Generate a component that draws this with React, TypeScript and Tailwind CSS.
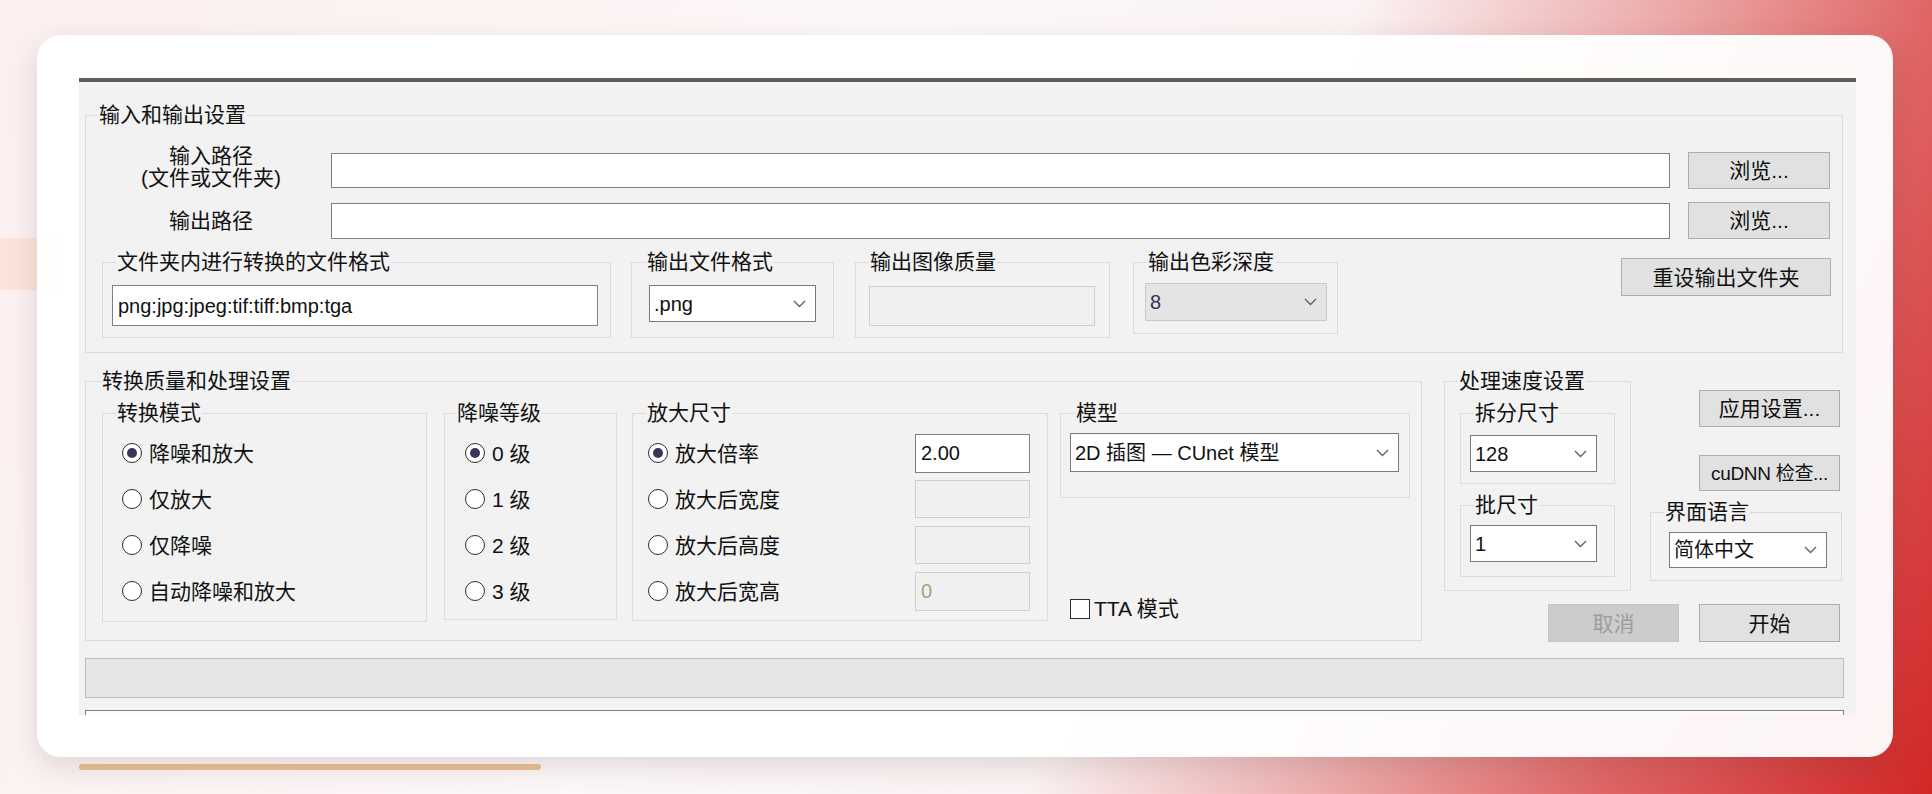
import type { ReactNode } from 'react';

// Win32 style dialog: waifu2x-caffe settings window inside a rounded card

function Group({
  title,
  className = '',
  titleClass = 'ml-[13px]',
  children,
}: {
  title: string;
  className?: string;
  titleClass?: string;
  children?: ReactNode;
}) {
  return (
    <div className={`shrink-0 pt-[12px] ${className}`}>
      <div className="flex h-full flex-col border border-[#dcdcdc]">
        <span className={`-mt-[13px] w-fit shrink-0 bg-[#f2f2f2] px-[1px] text-[21px] leading-[24px] ${titleClass}`}>{title}</span>
        {children}
      </div>
    </div>
  );
}

function Chevron() {
  return (
    <svg width="13" height="8" viewBox="0 0 13 8" className="shrink-0">
      <polyline points="1,1 6.5,6.5 12,1" fill="none" stroke="#5f5f5f" strokeWidth="1.3" />
    </svg>
  );
}

function Combo({ value, className = '', muted = false }: { value: string; className?: string; muted?: boolean }) {
  return (
    <div
      className={`flex shrink-0 items-center justify-between border pl-[4px] pr-[9px] ${
        muted ? 'border-[#c8c8c8] bg-[#e4e4e4] text-[#34344e]' : 'border-[#7a7a7a] bg-white'
      } ${className}`}
    >
      <span className="text-[20px] leading-none">{value}</span>
      <Chevron />
    </div>
  );
}

function Field({ value = '', className = '', disabled = false }: { value?: string; className?: string; disabled?: boolean }) {
  return (
    <div
      className={`flex shrink-0 items-center border pl-[5px] text-[20px] leading-none ${
        disabled ? 'border-[#cfcfcf] bg-[#f0f0f0] text-[#a3a37f]' : 'border-[#7f7f7f] bg-white'
      } ${className}`}
    >
      {value}
    </div>
  );
}

function Btn({ children, className = '', disabled = false }: { children: ReactNode; className?: string; disabled?: boolean }) {
  return (
    <button
      className={`flex shrink-0 items-center justify-center border leading-none ${
        disabled ? 'border-[#c4c4c4] bg-[#cccccc] text-[#9d9d9d]' : 'border-[#adadad] bg-[#e1e1e1]'
      } ${className.includes('text-[') ? '' : 'text-[21px]'} ${className}`}
    >
      {children}
    </button>
  );
}

function Radio({ label, checked = false }: { label: string; checked?: boolean }) {
  return (
    <div className="flex h-[46px] items-center">
      <span className="flex h-[20px] w-[20px] items-center justify-center rounded-full border-[1.5px] border-[#2e2e2e] bg-white">
        {checked && <span className="h-[10px] w-[10px] rounded-full bg-[#38375a]" />}
      </span>
      <span className="ml-[7px] text-[21px] leading-none">{label}</span>
    </div>
  );
}

function SizeRow({ label, checked = false, children }: { label: string; checked?: boolean; children: ReactNode }) {
  return (
    <div className="flex h-[46px] items-center justify-between pr-[17px]">
      <Radio label={label} checked={checked} />
      {children}
    </div>
  );
}

export default function App() {
  return (
    <div className="relative h-[794px] w-[1932px] overflow-hidden bg-[linear-gradient(113deg,#fcefef_0%,#fdf7f7_40%,#fbf3f3_60%,#eeb3b3_72%,#e06767_85%,#d22727_100%)] font-['Liberation_Sans','Noto_Sans_CJK_SC',sans-serif] text-[#111]">
      <div className="absolute left-0 top-[238px] h-[52px] w-[60px] bg-[#fbe3d9]" />

      <div className="relative ml-[37px] mt-[35px] h-[722px] w-[1856px] rounded-[24px] bg-white/95 pl-[42px] pt-[43px] shadow-[0_10px_28px_rgba(60,40,40,0.14)]">
        <div className="flex h-[637px] w-[1777px] flex-col items-start overflow-hidden border-t-4 border-[#5b6159] bg-[#f2f2f2]">
          {/* input / output */}
          <Group title="输入和输出设置" className="ml-[6px] mt-[21px] h-[250px] w-[1758px]" titleClass="ml-[12px]">
            <div className="mt-[25px] flex h-[37px] shrink-0 items-center">
              <div className="mb-[8px] w-[245px] pl-[5px] text-center text-[21px] leading-[22px]">
                <div>输入路径</div>
                <div>(文件或文件夹)</div>
              </div>
              <Field className="h-[35px] w-[1339px]" />
              <Btn className="ml-[18px] h-[37px] w-[142px]">浏览...</Btn>
            </div>
            <div className="mt-[13px] flex h-[37px] shrink-0 items-center">
              <div className="w-[245px] pl-[5px] text-center text-[21px] leading-[22px]">输出路径</div>
              <Field className="h-[36px] w-[1339px]" />
              <Btn className="ml-[18px] h-[37px] w-[142px]">浏览...</Btn>
            </div>
            <div className="mt-[11px] flex shrink-0 items-start">
              <Group title="文件夹内进行转换的文件格式" className="ml-[16px] h-[88px] w-[509px]">
                <Field value="png:jpg:jpeg:tif:tiff:bmp:tga" className="ml-[9px] mt-[11px] h-[41px] w-[486px]" />
              </Group>
              <Group title="输出文件格式" className="ml-[20px] h-[88px] w-[203px]" titleClass="ml-[14px]">
                <Combo value=".png" className="ml-[17px] mt-[11px] h-[37px] w-[167px]" />
              </Group>
              <Group title="输出图像质量" className="ml-[21px] h-[88px] w-[255px]">
                <Field disabled className="ml-[13px] mt-[12px] h-[40px] w-[226px]" />
              </Group>
              <Group title="输出色彩深度" className="ml-[23px] h-[84px] w-[205px]">
                <Combo value="8" muted className="ml-[11px] mt-[9px] h-[38px] w-[182px]" />
              </Group>
              <Btn className="ml-[283px] mt-[8px] h-[38px] w-[210px]">重设输出文件夹</Btn>
            </div>
          </Group>

          {/* conversion + speed */}
          <div className="ml-[6px] mt-[16px] flex shrink-0 items-start">
            <Group title="转换质量和处理设置" className="h-[272px] w-[1337px]" titleClass="ml-[15px]">
              <div className="mt-[8px] flex shrink-0 items-start">
                <Group title="转换模式" className="ml-[16px] h-[221px] w-[325px]">
                  <div className="mt-[5px] pl-[19px]">
                    <Radio label="降噪和放大" checked />
                    <Radio label="仅放大" />
                    <Radio label="仅降噪" />
                    <Radio label="自动降噪和放大" />
                  </div>
                </Group>
                <Group title="降噪等级" className="ml-[17px] h-[219px] w-[173px]" titleClass="ml-[11px]">
                  <div className="mt-[5px] pl-[20px]">
                    <Radio label="0 级" checked />
                    <Radio label="1 级" />
                    <Radio label="2 级" />
                    <Radio label="3 级" />
                  </div>
                </Group>
                <Group title="放大尺寸" className="ml-[15px] h-[220px] w-[416px]">
                  <div className="mt-[5px] pl-[15px]">
                    <SizeRow label="放大倍率" checked>
                      <Field value="2.00" className="h-[39px] w-[115px] text-[#111]" />
                    </SizeRow>
                    <SizeRow label="放大后宽度">
                      <Field disabled className="h-[38px] w-[115px]" />
                    </SizeRow>
                    <SizeRow label="放大后高度">
                      <Field disabled className="h-[38px] w-[115px]" />
                    </SizeRow>
                    <SizeRow label="放大后宽高">
                      <Field disabled value="0" className="h-[39px] w-[115px]" />
                    </SizeRow>
                  </div>
                </Group>
                <div className="ml-[12px] flex w-[350px] flex-col">
                  <Group title="模型" className="h-[97px] w-[350px]" titleClass="ml-[14px]">
                    <Combo value="2D 插图 — CUnet 模型" className="ml-[9px] mt-[8px] h-[39px] w-[329px]" />
                  </Group>
                  <div className="ml-[10px] mt-[100px] flex items-center">
                    <span className="h-[20px] w-[20px] border-[1.5px] border-[#2e2e2e] bg-white" />
                    <span className="ml-[4px] text-[21px] leading-none">TTA 模式</span>
                  </div>
                </div>
              </div>
            </Group>

            <div className="ml-[22px] w-[399px] shrink-0">
              <div className="flex items-start">
                <Group title="处理速度设置" className="h-[222px] w-[187px]">
                  <Group title="拆分尺寸" className="ml-[15px] mt-[8px] h-[83px] w-[155px]">
                    <Combo value="128" className="ml-[9px] mt-[10px] h-[37px] w-[127px]" />
                  </Group>
                  <Group title="批尺寸" className="ml-[15px] mt-[9px] h-[84px] w-[155px]">
                    <Combo value="1" className="ml-[9px] mt-[8px] h-[37px] w-[127px]" />
                  </Group>
                </Group>
                <div className="ml-[19px] flex w-[193px] flex-col">
                  <Btn className="ml-[49px] mt-[21px] h-[37px] w-[141px]">应用设置...</Btn>
                  <Btn className="ml-[49px] mt-[28px] h-[36px] w-[141px] text-[19px] tracking-[-0.3px]">cuDNN 检查...</Btn>
                  <Group title="界面语言" className="mt-[9px] h-[81px] w-[192px]">
                    <Combo value="简体中文" className="ml-[18px] mt-[8px] h-[36px] w-[158px]" />
                  </Group>
                </div>
              </div>
              <div className="mt-[13px] flex">
                <Btn disabled className="ml-[104px] h-[38px] w-[131px]">取消</Btn>
                <Btn className="ml-[20px] h-[38px] w-[141px]">开始</Btn>
              </div>
            </div>
          </div>

          {/* progress bar and log */}
          <div className="ml-[6px] mt-[16px] h-[40px] w-[1759px] shrink-0 border border-[#bcbcbc] bg-[#e6e6e6]" />
          <div className="ml-[6px] mt-[12px] h-[40px] w-[1759px] shrink-0 border border-[#828282] bg-[#fafafa]" />
        </div>
      </div>

      <div className="ml-[79px] mt-[7px] h-[6px] w-[462px] rounded-full bg-[#ebc196]" />
    </div>
  );
}
